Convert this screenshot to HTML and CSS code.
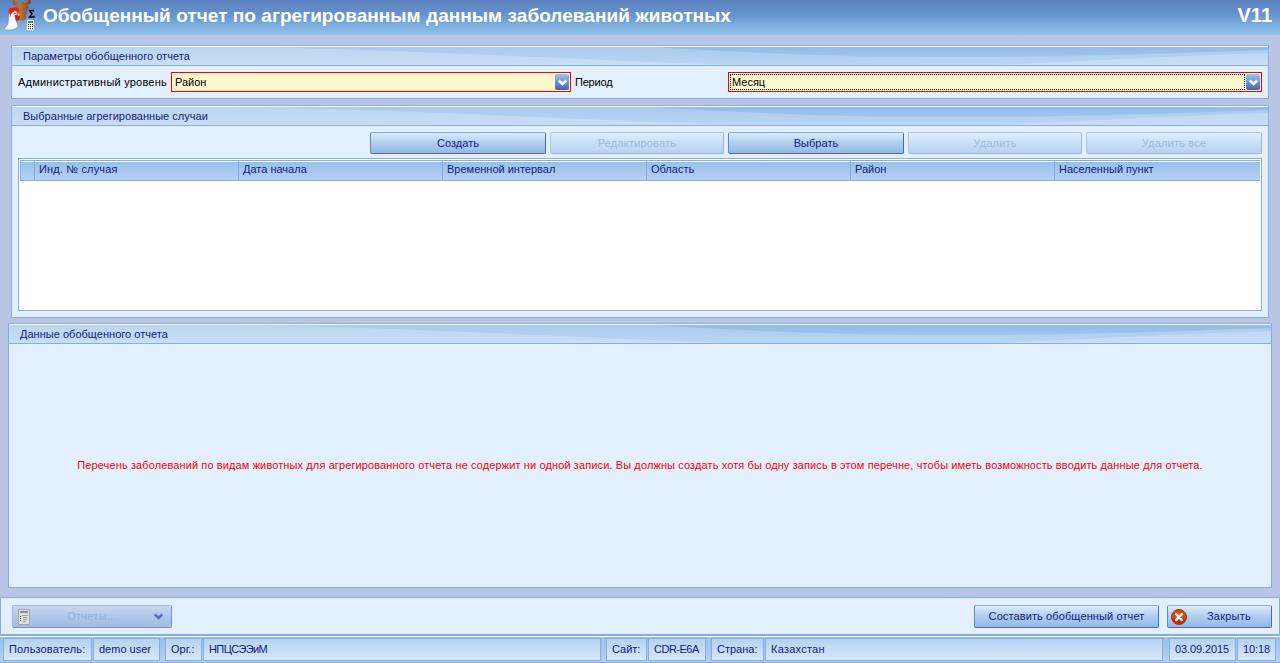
FILE: index.html
```html
<!DOCTYPE html>
<html lang="ru">
<head>
<meta charset="utf-8">
<title>Обобщенный отчет</title>
<link rel="stylesheet" href="styles.css">
</head>
<body>
<svg class="defs" width="0" height="0">
  <defs>
    <linearGradient id="ox" x1="0" y1="0" x2="1" y2="0"><stop offset="0" stop-color="#94582f"/><stop offset=".4" stop-color="#b87440"/><stop offset="1" stop-color="#7c4520"/></linearGradient>
    <linearGradient id="mid" x1="0" y1="0" x2="0" y2="1"><stop offset="0" stop-color="#a9c9f0"/><stop offset="1" stop-color="#bad6f1"/></linearGradient>
    <linearGradient id="deep" x1="0" y1="0" x2="0" y2="1"><stop offset="0" stop-color="#92bbea"/><stop offset="1" stop-color="#9fc4ee"/></linearGradient>
    <symbol id="wave" viewBox="0 0 1256 18" preserveAspectRatio="none">
      <path d="M220 0H1256V6C1180 8 1100 13 980 18H730C650 16 580 12 500 9C410 5 320 1 220 0Z" fill="url(#mid)"/>
      <path d="M640 0H1256V3C1160 6 1080 10 930 10C820 10 720 5 640 0Z" fill="url(#deep)"/>
    </symbol>
    <symbol id="chev" viewBox="0 0 9 7"><path d="M.8 1.500L4.500 5L8.200 1.500" fill="none" stroke="currentColor" stroke-width="2.500"/></symbol>
  </defs>
</svg>
<div class="window">
  <header class="title">
    <svg class="logo" width="36" height="32" viewBox="3 0 36 32">
      <path d="M13 0C11 4 14 6 17 6L15 9L18 18C20 22 25 21 26 18L27 10L29 7L27 5C31 5 32 2 30 0H28C28 2 26 3 24 2H19C17 2 15 2 15 0Z" fill="url(#ox)"/>
      <path d="M11 10C14 8 17 10 17 13L16 17C15 21 18 23 18 27L15 29L11 30H5L4.500 28C9 26 8 20 9 15Z" fill="#f7f8f9" stroke="#7d8592" stroke-width=".6"/>
      <path d="M10 14C7 11 9 7 13 8C16 6 20 9 19 12L15 11L13 12L11 14L10 18Z" fill="#e42410"/>
      <path d="M14.500 15L20 16L19 20L16 21Z" fill="#d81c0c"/>
      <path d="M17.500 13L21 15L18 16Z" fill="#f0a020"/>
      <circle cx="15" cy="13.500" r=".7" fill="#222"/>
      <path d="M33.500 11.500V10.500H29.500L32 13.800L29.500 17H34V15.800" fill="none" stroke="#000" stroke-width="1.300"/>
      <rect x="27" y="20" width="7" height="10" fill="#fff"/>
      <rect x="28" y="21" width="5" height="2" fill="#28a046"/>
      <path d="M28 24.500H33M28 26.500H33M28 28.500H33" stroke="#222" stroke-dasharray="1 1"/>
    </svg>
    <h1>Обобщенный отчет по агрегированным данным заболеваний животных</h1>
    <b class="version">V11</b>
  </header>

  <main class="content">
    <section class="panel params">
      <h2 class="caption"><svg class="wave"><use href="#wave"/></svg><span>Параметры обобщенного отчета</span></h2>
      <div class="fields">
        <label class="lbl-level">Административный уровень</label>
        <div class="combo level"><span>Район</span><i class="drop"><svg width="9" height="7"><use href="#chev"/></svg></i></div>
        <label class="lbl-period">Период</label>
        <div class="combo period"><span class="focused">Месяц</span><i class="drop"><svg width="9" height="7"><use href="#chev"/></svg></i></div>
      </div>
    </section>

    <section class="panel cases">
      <h2 class="caption"><svg class="wave"><use href="#wave"/></svg><span>Выбранные агрегированные случаи</span></h2>
      <div class="toolbar">
        <button class="btn">Создать</button>
        <button class="btn off">Редактировать</button>
        <button class="btn">Выбрать</button>
        <button class="btn off">Удалить</button>
        <button class="btn off">Удалить все</button>
      </div>
      <div class="grid">
        <div class="grid-head">
          <span></span><span class="num">Инд. № случая</span><span>Дата начала</span><span>Временной интервал</span><span>Область</span><span>Район</span><span>Населенный пункт</span>
        </div>
      </div>
    </section>

    <section class="panel data">
      <h2 class="caption"><svg class="wave"><use href="#wave"/></svg><span>Данные обобщенного отчета</span></h2>
      <p class="warning">Перечень заболеваний по видам животных для агрегированного отчета не содержит ни одной записи. Вы должны создать хотя бы одну запись в этом перечне, чтобы иметь возможность вводить данные для отчета.</p>
    </section>
  </main>

  <div class="actions">
    <button class="btn reports">
      <svg width="12" height="16" viewBox="0 0 12 16"><rect x=".5" y=".5" width="11" height="15" fill="#dedede" stroke="#a3a5aa"/><rect x="2" y="2" width="8" height="2" fill="#909090"/><path d="M4 6.500H10M5 8.500H9M5 10.500H9M5 12.500H8" stroke="#a0a0a0"/><path d="M2 7.500H3M2 9.500H3M2 11.500H3" stroke="#555"/></svg>
      <span>Отчеты...</span>
      <svg class="arrow" width="9" height="7"><use href="#chev"/></svg>
    </button>
    <button class="btn compose">Составить обобщенный отчет</button>
    <button class="btn close">
      <svg width="16" height="16" viewBox="0 0 16 16"><circle cx="8" cy="8" r="7.500" fill="#e8440a" stroke="#8c3a20"/><path d="M1.500 9A6.500 6.500 0 0 0 14.500 9Z" fill="#cc2808"/><path d="M5.200 5.200L10.800 10.800M10.800 5.200L5.200 10.800" stroke="#fff" stroke-width="2.600" stroke-linecap="round"/></svg>
      <span>Закрыть</span>
    </button>
  </div>

  <footer class="status">
    <span class="s1">Пользователь:</span><span class="s2">demo user</span><span class="s3">Орг.:</span><span class="s4">НПЦСЭЭиМ</span><span class="s5">Сайт:</span><span class="s6">CDR-E6A</span><span class="s7">Страна:</span><span class="s8">Казахстан</span><span class="s9">03.09.2015</span><span class="s10">10:18</span>
  </footer>
</div>
</body>
</html>
```
FILE: styles.css
```css
* { box-sizing: border-box; }
body { margin: 0; font: 11px/13px "Liberation Sans", Arial, sans-serif; color: #10217f; }
.defs { display: block; height: 0; }
.window { width: 1280px; height: 663px; display: flex; flex-direction: column; background: #b8c5e4; overflow: hidden; }
.title { height: 35px; flex: none; display: flex; padding: 0 8px 0 3px; background: linear-gradient(#5b82bf, #6692cd 40%, #92c4ec); color: #fff; }
.logo { flex: none; }
.title h1 { margin: 5px 0 0 4px; font-size: 19px; line-height: 22px; letter-spacing: .05px; white-space: nowrap; }
.version { margin: 4px 0 0 auto; font-size: 20px; line-height: 22px; }
.content { height: 562px; flex: none; padding: 10px 8px 9px; display: flex; flex-direction: column; }
.panel { border: 1px solid #86aee3; background: #e2f0fe; margin: 0 3px; flex: none; }
.params { height: 54px; margin-bottom: 6px; }
.cases { height: 213px; margin-bottom: 5px; }
.data { height: 265px; margin: 0; display: flex; flex-direction: column; }
.caption { margin: 0; height: 20px; flex: none; display: grid; font: inherit; border-top: 1px solid #fff; border-bottom: 1px solid #86aee3; background: linear-gradient(#bbd5f3, #cadef4); }
.caption > * { grid-area: 1 / 1; }
.caption span { padding: 3px 11px 0; letter-spacing: .02px; }
.wave { width: 100%; height: 18px; display: block; }
.fields { display: flex; padding: 6px 6px 0; color: #000; }
.fields label { padding-top: 4px; white-space: nowrap; }
.lbl-level { width: 153px; letter-spacing: .22px; }
.lbl-period { width: 157px; }
.fields .lbl-period { padding-left: 4px; letter-spacing: -.2px; }
.combo { height: 20px; border: 1px solid #f00; background: #fff8cc; display: flex; padding: 1px; }
.level { width: 400px; }
.period { width: 534px; }
.combo span { flex: 1; padding: 2px 2px 0; }
.combo .focused { border: 1px dotted #000; padding: 1px 1px 0; margin: 0 1px 0 0; }
.drop { width: 14px; display: flex; align-items: center; justify-content: center; border-radius: 2px; color: #fff; background: linear-gradient(#9dc2ef, #6b98d8 50%, #3f64ac); }
.toolbar { display: grid; grid-template-columns: 176px 174px 176px 174px 176px; gap: 4px; justify-content: end; padding: 6px 6px 4px; }
.btn { height: 22px; padding: 0; font: inherit; color: #10217f; border: 1px solid #6487c8; border-color: #86aee3 #4c69b0 #4c69b0 #6487c8; border-radius: 2px; background: linear-gradient(#dcedfc, #b3d0f2 45%, #93b8e8); letter-spacing: .05px; }
.off { color: #9cbae6; border-color: #a9c8ed #9db4dc #9db4dc #a9c8ed; background: linear-gradient(#deedfc, #cce1f7 45%, #b8d1f1); letter-spacing: .2px; }
.grid { margin: 0 6px; height: 153px; border: 1px solid #86aee3; background: #fff; padding: 1px; }
.grid-head { height: 21px; display: grid; grid-template-columns: 13px repeat(5, 204px) 1fr; border: 1px solid #86aee3; border-right: 0; background: linear-gradient(#fff 1px, #98bfec 1px, #b5d2f1); }
.grid-head span { padding: 2px 4px 0; border-left: 1px solid #86aee3; }
.grid-head span:first-child { border: 0; }
.grid-head .num { letter-spacing: .15px; }
.warning { margin: auto; color: #f00; white-space: nowrap; letter-spacing: .112px; }
.actions { height: 39px; flex: none; display: flex; padding: 7px 7px 0 11px; border: 1px solid #86aee3; border-bottom-width: 2px; background: #e2f0fe; }
.actions .btn { height: 23px; display: flex; align-items: center; justify-content: center; }
.actions .reports { width: 160px; padding: 0 8px 0 5px; justify-content: space-between; color: #8fb4e6; border-color: #a1b9e2 #788fc8 #788fc8 #a1b9e2; background: linear-gradient(#c9d8f0, #b2c7e9 45%, #a3bbe2); letter-spacing: .25px; }
.arrow { color: #5570b5; }
.compose { width: 185px; margin-left: auto; }
.actions .compose { letter-spacing: .11px; }
.actions .close { width: 105px; margin-left: 8px; padding: 0 20px 0 3px; justify-content: space-between; letter-spacing: .25px; }
.status { height: 27px; flex: none; display: flex; padding: 1px 3px; border-top: 1px solid #fff; border-bottom: 1px solid #86aee3; background: linear-gradient(#98bfec, #b5d2f1); }
.status span { height: 23px; padding: 4px 5px 0; border: 1px solid #86aee3; background: linear-gradient(#b5d2f1, #d6e7f9); white-space: nowrap; }
.s1 { width: 89px; letter-spacing: .15px; } .s2 { width: 67px; margin-left: 1px; }
.s3 { width: 37px; margin-left: 5px; } .s4 { width: 398px; margin-left: 1px; letter-spacing: -.6px; }
.s5 { width: 41px; margin-left: 5px; } .s6 { width: 58px; margin-left: 1px; letter-spacing: -.5px; }
.s7 { width: 53px; margin-left: 5px; } .s8 { width: 398px; margin-left: 1px; letter-spacing: .25px; }
.s9 { width: 67px; margin-left: 6px; letter-spacing: -.1px; } .s10 { width: 39px; margin-left: 1px; letter-spacing: -.1px; }
```
